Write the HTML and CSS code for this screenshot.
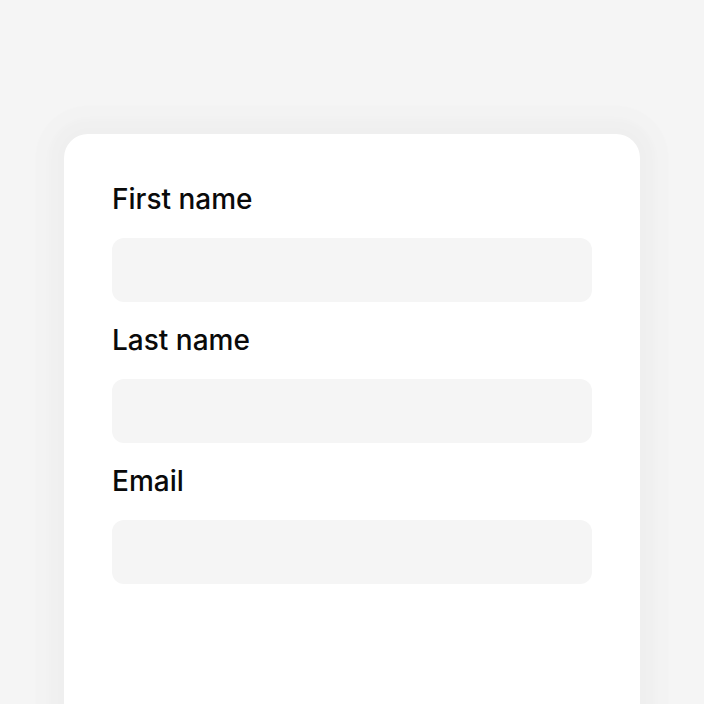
FILE: index.html
```html
<!DOCTYPE html>
<html lang="en">
<head>
<meta charset="utf-8">
<title>Form</title>
<link rel="stylesheet" href="styles.css">
</head>
<body>
<main class="page">
  <form class="card">
    <div class="field">
      <label class="label" for="first">First name</label>
      <input class="input" id="first" type="text">
    </div>
    <div class="field">
      <label class="label" for="last">Last name</label>
      <input class="input" id="last" type="text">
    </div>
    <div class="field">
      <label class="label" for="email">Email</label>
      <input class="input" id="email" type="email">
    </div>
  </form>
</main>
</body>
</html>
```
FILE: styles.css
```css
html, body {
  margin: 0;
  padding: 0;
  height: 100%;
  overflow: hidden;
  background: #f5f5f5;
}
.page {
  display: flex;
  justify-content: center;
  padding-top: 134px;
}
.card {
  width: 576px;
  min-height: 700px;
  box-sizing: border-box;
  background: #ffffff;
  border-radius: 24px;
  padding: 48px 48px;
  display: flex;
  flex-direction: column;
  gap: 21px;
  box-shadow: 0 0 6px 14px rgba(0,0,0,0.012), 0 0 8px 28px rgba(0,0,0,0.007), 0 0 10px 40px rgba(0,0,0,0.005);
}
.field {
  display: flex;
  flex-direction: column;
}
.label {
  font-family: Inter, "Liberation Sans", sans-serif;
  font-size: 28px;
  line-height: 34px;
  font-weight: 500;
  color: #0a0a0a;
  margin-bottom: 22px;
}
.input {
  height: 64px;
  border: none;
  border-radius: 12px;
  background: #f5f5f5;
  padding: 0 16px;
  font: inherit;
  outline: none;
  box-sizing: border-box;
  width: 100%;
}
```
